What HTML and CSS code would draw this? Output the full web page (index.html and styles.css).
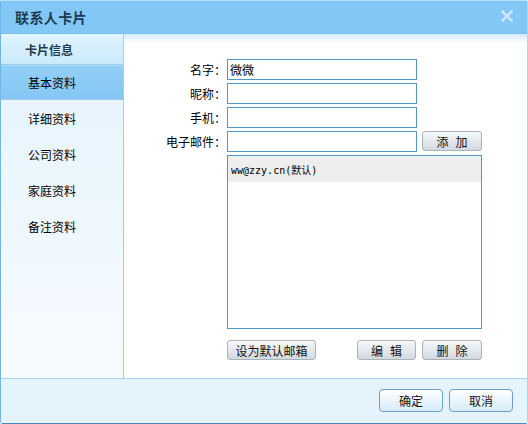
FILE: index.html
```html
<!DOCTYPE html>
<html lang="zh">
<head>
<meta charset="utf-8">
<title>联系人卡片</title>
<link rel="stylesheet" href="styles.css">
</head>
<body>
<div class="window">
  <div class="titlebar">
    <span class="title">联系人卡片</span>
    <svg class="close" width="12" height="12" viewBox="0 0 12 12"><path d="M1.5 1.5 L10.5 10.5 M10.5 1.5 L1.5 10.5" stroke="#cfe8fa" stroke-width="2.4" stroke-linecap="square"/></svg>
  </div>
  <div class="main">
    <div class="sidebar">
      <div class="side-head">卡片信息</div>
      <div class="side-item active">基本资料</div>
      <div class="side-item">详细资料</div>
      <div class="side-item">公司资料</div>
      <div class="side-item">家庭资料</div>
      <div class="side-item">备注资料</div>
    </div>
    <div class="content">
      <div class="form">
        <label class="lbl">名字：</label><div class="input">微微</div><div></div>
        <label class="lbl">昵称：</label><div class="input"></div><div></div>
        <label class="lbl">手机：</label><div class="input"></div><div></div>
        <label class="lbl">电子邮件：</label><div class="input"></div><div class="btn spaced"><span>添</span><span>加</span></div>
        <div></div>
        <div class="listbox"><div class="list-item sel">ww@zzy.cn(默认)</div></div>
        <div></div>
        <div class="actions">
          <div class="btn wide">设为默认邮箱</div>
          <div class="spacer"></div>
          <div class="btn spaced"><span>编</span><span>辑</span></div>
          <div class="btn spaced del"><span>删</span><span>除</span></div>
        </div>
      </div>
    </div>
  </div>
  <div class="footer">
    <div class="fbtn">确定</div>
    <div class="fbtn">取消</div>
  </div>
</div>
</body>
</html>
```
FILE: styles.css
```css
* { box-sizing: border-box; }
html, body { margin: 0; padding: 0; }
body {
  width: 528px; height: 424px; overflow: hidden;
  font-family: "Noto Sans CJK SC", "Liberation Sans", sans-serif;
  font-size: 12px; color: #000;
}
.window {
  width: 528px; height: 424px;
  display: flex; flex-direction: column;
  border-left: 1px solid #6db6ea;
  border-right: 1px solid #a9d6f6;
  border-bottom: 1px solid #4a88bf;
  border-top: 1px solid #b6dffa;
  border-radius: 2px 2px 3px 3px;
  background: #fff;
}
.titlebar {
  height: 33px; flex: none;
  background: #82c8f6;
  display: flex; align-items: center; justify-content: space-between;
  padding: 0 14px 0 14px;
  border-bottom: 1px solid #7cbfee;
}
.title { font-size: 14px; font-weight: bold; color: #1c3a52; letter-spacing: 0.4px; }
.close { display: block; margin-top: -3px; }
.main { flex: 1; display: flex; min-height: 0; }
.sidebar {
  width: 123px; flex: none;
  border-right: 1px solid #a8cfe8;
  background: linear-gradient(#e4f3fd, #f7fbff);
  display: flex; flex-direction: column;
}
.side-head {
  height: 31px;
  padding-left: 24px;
  display: flex; align-items: center;
  font-weight: bold; color: #1f3b52;
  background: linear-gradient(#e0f4fe, #cbe9fb);
  border-bottom: 1px solid #9ccbeb;
}
.side-item {
  height: 36px; padding-left: 27px;
  display: flex; align-items: center;
}
.side-item.active {
  height: 35px;
  background: linear-gradient(#92cff7, #84c6f4);
  border-top: 1px solid #a8daf8;
  border-bottom: 1px solid #9ccbeb;
}
.content {
  flex: 1;
  background: linear-gradient(#d4eafa 0, #ffffff 9px);
  padding-top: 25px;
}
.form {
  display: grid;
  grid-template-columns: 98px 190px 60px;
  column-gap: 5px;
  row-gap: 3px;
  grid-auto-rows: 21px;
}
.lbl { display: flex; align-items: center; justify-content: flex-end; margin-right: -4px; }
.input {
  border: 1px solid #5299cb; height: 21px;
  display: flex; align-items: center; padding-left: 2px;
  background: #fff;
}
.btn {
  height: 20px;
  border: 1px solid #aab2ba; border-radius: 3px;
  background: linear-gradient(#f6f8fa, #d2d9df);
  display: flex; align-items: center; justify-content: center;
  color: #111;
}
.btn.spaced { gap: 7px; }
.listbox {
  grid-column: 2 / 4;
  height: 174px; align-self: start;
  border: 1px solid #5299cb;
}
.list-item {
  height: 26px; display: flex; align-items: center; padding-left: 3px;
  font-family: "DejaVu Sans Mono", "Noto Sans CJK SC", monospace; font-size: 10px;
}
.list-item.sel { background: #eeeeee; }
.actions {
  grid-column: 2 / 4;
  margin-top: 161px;
  display: flex; gap: 6px;
}
.actions .btn { width: 59px; }
.actions .btn.wide { width: 89px; }
.actions .btn.del { width: 60px; }
.spacer { flex: 1; }
.footer {
  height: 45px; flex: none;
  background: #e5f3fc;
  border-top: 1px solid #a9d4f0;
  display: flex; justify-content: flex-end; align-items: flex-start;
  padding: 10px 14px 0 0; gap: 6px;
}
.fbtn {
  width: 64px; height: 23px;
  border: 1px solid #6f9fc6; border-radius: 4px;
  background: linear-gradient(#ffffff, #d6ebf9);
  display: flex; align-items: center; justify-content: center;
  color: #111;
}
```
